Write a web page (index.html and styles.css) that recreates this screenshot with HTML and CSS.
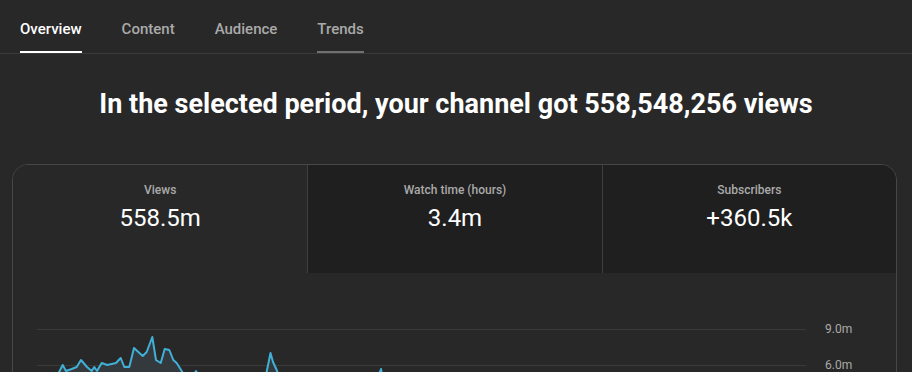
FILE: index.html
```html
<!DOCTYPE html>
<html lang="en">
<head>
    <meta charset="UTF-8">
    <meta name="viewport" content="width=device-width, initial-scale=1.0">
    <title>Channel analytics</title>
    <link rel="stylesheet" href="styles.css">
</head>
<body>
    <nav class="tabs">
        <a class="tab active">Overview</a>
        <a class="tab">Content</a>
        <a class="tab">Audience</a>
        <a class="tab hover">Trends</a>
    </nav>

    <h1 class="headline">In the selected period, your channel got 558,548,256 views</h1>

    <div class="card">
        <div class="metrics">
            <div class="metric selected">
                <div class="metric-label">Views</div>
                <div class="metric-value">558.5m</div>
            </div>
            <div class="metric">
                <div class="metric-label">Watch time (hours)</div>
                <div class="metric-value">3.4m</div>
            </div>
            <div class="metric">
                <div class="metric-label">Subscribers</div>
                <div class="metric-value">+360.5k</div>
            </div>
        </div>
        <div class="chart">
            <svg width="883" height="200" viewBox="0 0 883 200">
                <line class="grid" x1="24" y1="56.5" x2="793" y2="56.5"/>
                <line class="grid" x1="24" y1="92.5" x2="793" y2="92.5"/>
                <text class="axis" x="812" y="60">9.0m</text>
                <text class="axis" x="812" y="96">6.0m</text>
                <polygon class="area" points="42,107 49.7,92 53,98 58.7,96 63.7,94 68,87 74,94 78.7,98 81.3,94 84,98 88.7,90 94.3,92 103,90 107.7,85 111.3,94 116.3,94 121,75 129.7,83 133.7,79 139.3,64 143,87 147.7,90 151.7,76 156.3,77 160.3,87 163.7,90 168.7,98 173,107 179,105 183,98 186,105 197,112 247,112 253,102 257.5,80 260,89 263.7,97 267,107 362,112 368,96 371,112 500,115 790,115 790,200 42,200"/>
                <polyline class="line" points="42,107 49.7,92 53,98 58.7,96 63.7,94 68,87 74,94 78.7,98 81.3,94 84,98 88.7,90 94.3,92 103,90 107.7,85 111.3,94 116.3,94 121,75 129.7,83 133.7,79 139.3,64 143,87 147.7,90 151.7,76 156.3,77 160.3,87 163.7,90 168.7,98 173,107 179,105 183,98 186,105 197,112 247,112 253,102 257.5,80 260,89 263.7,97 267,107 362,112 368,96 371,112 500,115 790,115"/>
            </svg>
        </div>
    </div>
</body>
</html>
```

FILE: styles.css
```css
body {
    margin: 0;
    background: #282828;
    color: #fff;
    font-family: Roboto, "Liberation Sans", sans-serif;
}

.tabs {
    display: flex;
    gap: 40px;
    padding-left: 20px;
    border-bottom: 1px solid #3a3a3a;
}
.tab {
    padding: 19px 0 12px;
    line-height: 20px;
    font-size: 15px;
    font-weight: 500;
    color: #aaa;
    border-bottom: 2px solid transparent;
}
.tab.active {
    color: #fff;
    border-bottom-color: #fff;
}
.tab.hover {
    border-bottom-color: #717171;
}

.headline {
    margin: 34px 0 44px;
    font-size: 27px;
    line-height: 32px;
    font-weight: 700;
    text-align: center;
}

.card {
    margin: 0 15px 0 12px;
    border: 1px solid #474747;
    border-radius: 16px;
    overflow: hidden;
}
.metrics {
    display: grid;
    grid-template-columns: repeat(3, 1fr);
    height: 108px;
}
.metric {
    padding-top: 17px;
    text-align: center;
    background: #1f1f1f;
    border-left: 1px solid #3f3f3f;
}
.metric.selected {
    background: #282828;
    border-left: 0;
}
.metric-label {
    font-size: 12px;
    line-height: 16px;
    font-weight: 500;
    color: #aaa;
}
.metric-value {
    margin-top: 4px;
    font-size: 24px;
    line-height: 32px;
}

.chart svg {
    display: block;
}
.grid {
    stroke: #3a3a3a;
    stroke-width: 1;
}
.axis {
    font-size: 12px;
    fill: #aaa;
}
.area {
    fill: #33393d;
}
.line {
    fill: none;
    stroke: #41b0d6;
    stroke-width: 2;
    stroke-linejoin: round;
}
```
